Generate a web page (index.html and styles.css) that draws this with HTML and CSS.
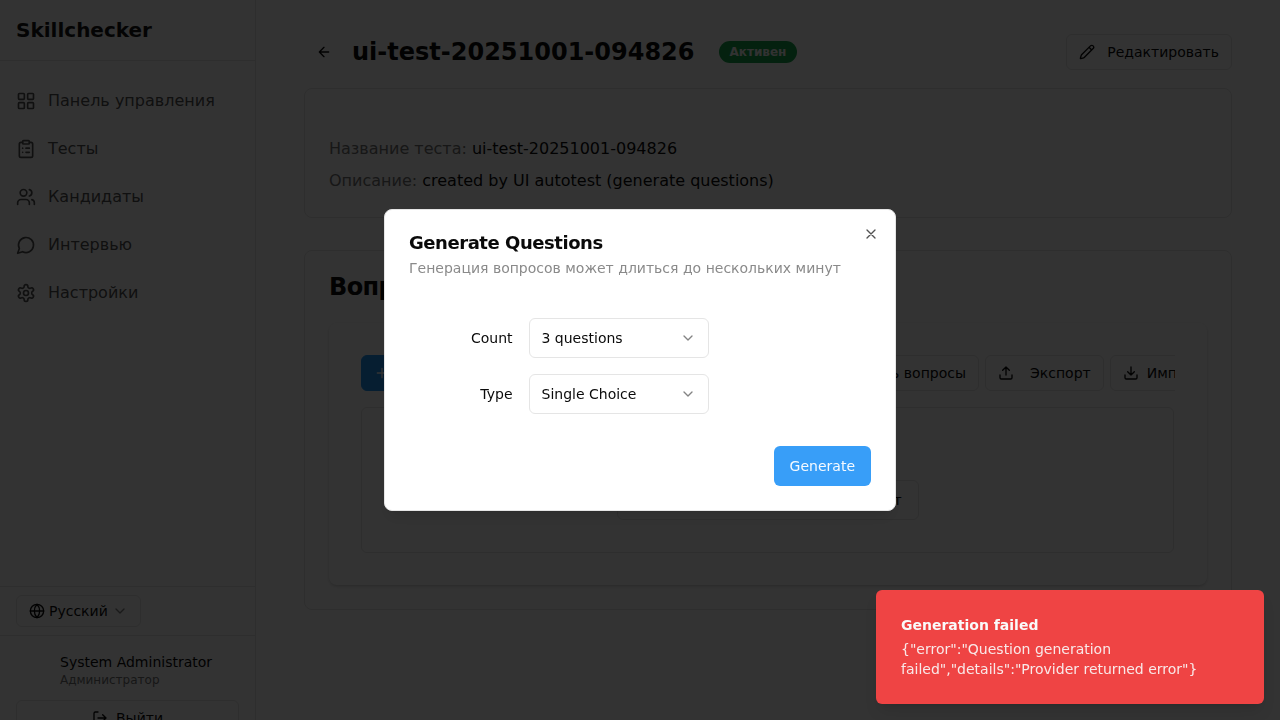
FILE: index.html
```html
<!DOCTYPE html>
<html lang="ru">
<head>
<meta charset="utf-8">
<title>Skillchecker</title>
<link rel="stylesheet" href="styles.css">
</head>
<body>
<div class="app">
  <aside class="sidebar">
    <div class="brand">Skillchecker</div>
    <nav class="nav">
      <a class="nav-item"><svg class="icon i20" viewBox="0 0 24 24"><rect x="3" y="3" width="7" height="7" rx="1"/><rect x="14" y="3" width="7" height="7" rx="1"/><rect x="14" y="14" width="7" height="7" rx="1"/><rect x="3" y="14" width="7" height="7" rx="1"/></svg>Панель управления</a>
      <a class="nav-item"><svg class="icon i20" viewBox="0 0 24 24"><rect x="8" y="2" width="8" height="4" rx="1"/><path d="M16 4h2a2 2 0 0 1 2 2v14a2 2 0 0 1-2 2H6a2 2 0 0 1-2-2V6a2 2 0 0 1 2-2h2M12 11h4M12 16h4M8 11h.01M8 16h.01"/></svg>Тесты</a>
      <a class="nav-item"><svg class="icon i20" viewBox="0 0 24 24"><path d="M16 21v-2a4 4 0 0 0-4-4H6a4 4 0 0 0-4 4v2"/><circle cx="9" cy="7" r="4"/><path d="M22 21v-2a4 4 0 0 0-3-3.87M16 3.13a4 4 0 0 1 0 7.75"/></svg>Кандидаты</a>
      <a class="nav-item"><svg class="icon i20" viewBox="0 0 24 24"><path d="M7.9 20A9 9 0 1 0 4 16.1L2 22Z"/></svg>Интервью</a>
      <a class="nav-item"><svg class="icon i20" viewBox="0 0 24 24"><path d="M12.22 2h-.44a2 2 0 0 0-2 2v.18a2 2 0 0 1-1 1.73l-.43.25a2 2 0 0 1-2 0l-.15-.08a2 2 0 0 0-2.73.73l-.22.38a2 2 0 0 0 .73 2.73l.15.1a2 2 0 0 1 1 1.72v.51a2 2 0 0 1-1 1.74l-.15.09a2 2 0 0 0-.73 2.73l.22.38a2 2 0 0 0 2.73.73l.15-.08a2 2 0 0 1 2 0l.43.25a2 2 0 0 1 1 1.73V20a2 2 0 0 0 2 2h.44a2 2 0 0 0 2-2v-.18a2 2 0 0 1 1-1.73l.43-.25a2 2 0 0 1 2 0l.15.08a2 2 0 0 0 2.73-.73l.22-.39a2 2 0 0 0-.73-2.73l-.15-.08a2 2 0 0 1-1-1.74v-.5a2 2 0 0 1 1-1.74l.15-.09a2 2 0 0 0 .73-2.73l-.22-.38a2 2 0 0 0-2.73-.73l-.15.08a2 2 0 0 1-2 0l-.43-.25a2 2 0 0 1-1-1.73V4a2 2 0 0 0-2-2z"/><circle cx="12" cy="12" r="3"/></svg>Настройки</a>
    </nav>
    <div class="language">
      <button class="btn lang-btn"><svg class="icon" viewBox="0 0 24 24"><circle cx="12" cy="12" r="10"/><path d="M12 2a14.5 14.5 0 0 0 0 20 14.5 14.5 0 0 0 0-20M2 12h20"/></svg><span>Русский</span><svg class="icon chevron" viewBox="0 0 24 24"><path d="m6 9 6 6 6-6"/></svg></button>
    </div>
    <div class="account">
      <div class="person"><div class="person-name">System Administrator</div><div class="person-role">Администратор</div></div>
      <button class="btn logout"><svg class="icon" viewBox="0 0 24 24"><path d="M9 21H5a2 2 0 0 1-2-2V5a2 2 0 0 1 2-2h4M16 17l5-5-5-5M21 12H9"/></svg>Выйти</button>
    </div>
  </aside>

  <main class="main">
    <header class="page-head">
      <button class="back"><svg class="icon" viewBox="0 0 24 24"><path d="m12 19-7-7 7-7M19 12H5"/></svg></button>
      <h1>ui-test-20251001-094826</h1>
      <span class="badge">Активен</span>
      <button class="btn edit"><svg class="icon" viewBox="0 0 24 24"><path d="M21.174 6.812a1 1 0 0 0-3.986-3.987L3.842 16.174a2 2 0 0 0-.5.83l-1.321 4.352a.5.5 0 0 0 .623.622l4.353-1.32a2 2 0 0 0 .83-.497zM15 5l4 4"/></svg>Редактировать</button>
    </header>

    <section class="card details">
      <div><span class="label">Название теста:</span> ui-test-20251001-094826</div>
      <div><span class="label">Описание:</span> created by UI autotest (generate questions)</div>
    </section>

    <section class="card questions">
      <h2>Вопросы</h2>
      <div class="panel">
        <div class="toolbar">
          <button class="btn primary"><svg class="icon" viewBox="0 0 24 24"><path d="M5 12h14M12 5v14"/></svg>Добавить вопрос</button>
          <button class="btn generate-btn">Сгенерировать вопросы</button>
          <button class="btn export-btn"><svg class="icon" viewBox="0 0 24 24"><path d="M21 15v4a2 2 0 0 1-2 2H5a2 2 0 0 1-2-2v-4M17 8l-5-5-5 5M12 3v12"/></svg>Экспорт</button>
          <button class="btn import-btn"><svg class="icon" viewBox="0 0 24 24"><path d="M21 15v4a2 2 0 0 1-2 2H5a2 2 0 0 1-2-2v-4M7 10l5 5 5-5M12 15V3"/></svg>Импорт</button>
        </div>
        <div class="empty"><button class="btn empty-btn">Добавить первый вопрос в тест</button></div>
      </div>
    </section>
  </main>
</div>

<div class="overlay">
  <div class="dialog">
    <button class="close"><svg class="icon" viewBox="0 0 24 24"><path d="M18 6 6 18M6 6l12 12"/></svg></button>
    <h3>Generate Questions</h3>
    <p class="description">Генерация вопросов может длиться до нескольких минут</p>
    <div class="fields">
      <label>Count</label>
      <button class="select"><span>3 questions</span><svg class="icon chevron" viewBox="0 0 24 24"><path d="m6 9 6 6 6-6"/></svg></button>
      <label>Type</label>
      <button class="select"><span>Single Choice</span><svg class="icon chevron" viewBox="0 0 24 24"><path d="m6 9 6 6 6-6"/></svg></button>
    </div>
    <div class="actions"><button class="submit">Generate</button></div>
  </div>
</div>

<div class="toast">
  <div class="toast-title">Generation failed</div>
  <div class="toast-text">{"error":"Question generation failed","details":"Provider returned error"}</div>
</div>
</body>
</html>
```

FILE: styles.css
```css
* { box-sizing: border-box; }
body {
  margin: 0;
  height: 720px;
  overflow: hidden;
  background: #fff;
  color: #0a0a0a;
  font-family: "DejaVu Sans", sans-serif;
  font-size: 16px;
  line-height: 24px;
}
h1, h2, h3, p { margin: 0; }
button { font: inherit; color: inherit; margin: 0; }
.icon {
  width: 16px;
  height: 16px;
  flex: none;
  fill: none;
  stroke: currentColor;
  stroke-width: 2;
  stroke-linecap: round;
  stroke-linejoin: round;
}
.i20 { width: 20px; height: 20px; }
.chevron { opacity: .5; }
.app { display: flex; height: 720px; }

.sidebar {
  width: 256px;
  flex: none;
  display: flex;
  flex-direction: column;
  background: #fff;
  border-right: 1px solid #e5e5e5;
}
.brand {
  height: 61px;
  padding: 16px;
  border-bottom: 1px solid #e5e5e5;
  font-size: 20px;
  line-height: 28px;
  font-weight: 700;
  color: #171717;
}
.nav {
  flex: 1;
  display: flex;
  flex-direction: column;
  gap: 8px;
  padding: 20px 16px;
  color: #525252;
}
.nav-item { display: flex; align-items: center; gap: 12px; height: 40px; }
.language { height: 49px; padding: 8px 16px; border-top: 1px solid #e5e5e5; }
.btn {
  display: flex;
  align-items: center;
  flex: none;
  height: 36px;
  padding: 0 12px;
  border: 1px solid #e5e5e5;
  border-radius: 6px;
  background: #fff;
  font-size: 14px;
  line-height: 20px;
  white-space: nowrap;
}
.lang-btn { height: 32px; gap: 4px; }
.account {
  height: 85px;
  flex: none;
  padding: 16px 16px 0;
  border-top: 1px solid #e5e5e5;
}
.person { padding-left: 44px; margin-bottom: 12px; }
.person-name { font-size: 14px; line-height: 20px; }
.person-role { font-size: 12px; line-height: 16px; color: #737373; }
.logout { width: 223px; justify-content: center; gap: 8px; }

.main { flex: 1; min-width: 0; padding: 34px 48px 0; }
.page-head { display: flex; align-items: center; height: 36px; margin-bottom: 18px; }
.back {
  display: flex;
  align-items: center;
  padding: 0 12px;
  margin-right: 8px;
  border: 0;
  background: none;
}
h1 { font-size: 24px; line-height: 32px; font-weight: 700; }
.badge {
  height: 22px;
  margin-left: 24px;
  padding: 0 11px;
  border-radius: 11px;
  background: #16a34a;
  color: #fafafa;
  font-size: 12px;
  line-height: 22px;
  font-weight: 700;
}
.edit { margin-left: auto; gap: 12px; }
.card { border: 1px solid #e5e5e5; border-radius: 8px; background: #fff; }
.details {
  display: flex;
  flex-direction: column;
  gap: 8px;
  height: 130px;
  margin-bottom: 32px;
  padding: 48px 24px 0;
}
.label { color: #737373; }
.questions { height: 360px; padding: 20px 24px 24px; }
h2 { font-size: 24px; line-height: 32px; font-weight: 700; letter-spacing: -.6px; }
.panel {
  height: 262px;
  margin-top: 20px;
  padding: 32px;
  border-radius: 8px;
  box-shadow: 0 1px 3px rgba(0, 0, 0, .12), 0 2px 4px -1px rgba(0, 0, 0, .1);
}
.toolbar { display: flex; gap: 6px; overflow: hidden; }
.primary { width: 180px; gap: 8px; background: #2196f3; border-color: #2196f3; color: #fff; }
.generate-btn { width: 432px; justify-content: flex-end; }
.export-btn { gap: 16px; }
.import-btn { gap: 8px; }
.empty {
  display: flex;
  justify-content: center;
  align-items: flex-start;
  height: 146px;
  margin-top: 16px;
  margin-right: .6px;
  padding-top: 72px;
  border: 1px solid #e5e5e5;
  border-radius: 6px;
}
.empty-btn { width: 302px; height: 40px; padding: 0 16px; justify-content: flex-end; }

.overlay {
  position: fixed;
  inset: 0;
  display: flex;
  align-items: center;
  justify-content: center;
  background: rgba(0, 0, 0, .8);
}
.dialog {
  position: relative;
  width: 512px;
  height: 302px;
  padding: 24px;
  border: 1px solid #e5e5e5;
  border-radius: 8px;
  background: #fff;
  box-shadow: 0 10px 15px -3px rgba(0, 0, 0, .1), 0 4px 6px -4px rgba(0, 0, 0, .1);
}
.close {
  position: absolute;
  top: 16px;
  right: 16px;
  display: flex;
  padding: 0;
  border: 0;
  background: none;
  opacity: .7;
}
h3 { font-size: 18px; line-height: 18px; font-weight: 600; letter-spacing: -.45px; }
.description { margin-top: 6px; font-size: 14px; line-height: 20px; color: #8a8a8a; }
.fields {
  display: grid;
  grid-template-columns: 103.5px 180px;
  gap: 16px;
  align-items: center;
  margin-top: 40px;
  font-size: 14px;
}
.fields label { text-align: right; line-height: 14px; }
.select {
  display: flex;
  align-items: center;
  justify-content: space-between;
  height: 40px;
  padding: 0 12px;
  border: 1px solid #e5e5e5;
  border-radius: 6px;
  background: #fff;
}
.actions { display: flex; justify-content: flex-end; margin-top: 32px; }
.submit {
  height: 40px;
  padding: 0 16px;
  border: 0;
  border-radius: 6px;
  background: #389ef8;
  color: #f5faff;
  font-size: 14px;
}
.toast {
  position: fixed;
  right: 16px;
  bottom: 16px;
  width: 388px;
  height: 114px;
  padding: 25px;
  border-radius: 6px;
  background: #ef4444;
  color: #fafafa;
  font-size: 14px;
  line-height: 20px;
  box-shadow: 0 10px 15px -3px rgba(0, 0, 0, .1), 0 4px 6px -4px rgba(0, 0, 0, .1);
}
.toast-title { font-weight: 600; margin-bottom: 4px; }
.toast-text { width: 314px; opacity: .9; }
```
